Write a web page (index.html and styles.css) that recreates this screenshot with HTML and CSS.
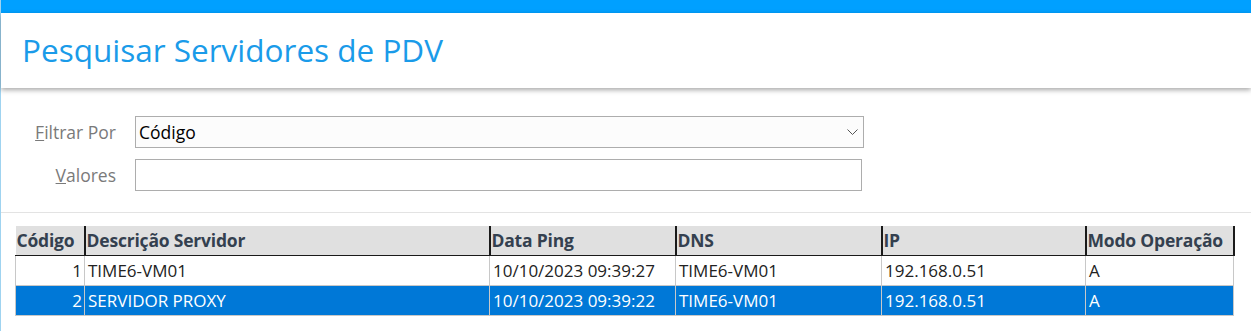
FILE: index.html
```html
<!DOCTYPE html>
<html lang="pt-BR">
<head>
    <meta charset="UTF-8">
    <title>Pesquisar Servidores de PDV</title>
    <link rel="stylesheet" href="styles.css">
</head>
<body>
<div class="page">
    <div class="topbar"></div>
    <div class="header">
        <h1 class="title">Pesquisar Servidores de PDV</h1>
    </div>
    <div class="filters">
        <div class="row">
            <span class="label"><u>F</u>iltrar Por</span>
            <div class="select">
                <span>Código</span>
                <svg width="11" height="7" viewBox="0 0 11 7"><path d="M0.5 0.5 L5.5 5.5 L10.5 0.5" fill="none" stroke="#555" stroke-width="1"/></svg>
            </div>
        </div>
        <div class="row">
            <span class="label"><u>V</u>alores</span>
            <div class="input"></div>
        </div>
    </div>
    <div class="gridarea">
        <table class="grid">
            <thead>
                <tr>
                    <th class="c1">Código</th>
                    <th class="c2">Descrição Servidor</th>
                    <th class="c3">Data Ping</th>
                    <th class="c4">DNS</th>
                    <th class="c5">IP</th>
                    <th class="c6">Modo Operação</th>
                </tr>
            </thead>
            <tbody>
                <tr>
                    <td class="num">1</td>
                    <td>TIME6-VM01</td>
                    <td>10/10/2023 09:39:27</td>
                    <td>TIME6-VM01</td>
                    <td>192.168.0.51</td>
                    <td>A</td>
                </tr>
                <tr class="selected">
                    <td class="num">2</td>
                    <td>SERVIDOR PROXY</td>
                    <td>10/10/2023 09:39:22</td>
                    <td>TIME6-VM01</td>
                    <td>192.168.0.51</td>
                    <td>A</td>
                </tr>
            </tbody>
        </table>
    </div>
</div>
</body>
</html>
```

FILE: styles.css
```css
*{margin:0;padding:0;box-sizing:border-box;}
body{background:#fff;font-family:"Open Sans","Noto Sans",sans-serif;width:1251px;height:331px;overflow:hidden;}
.page{border-left:1px solid #9fd3f0;height:331px;}
.topbar{height:13px;background:#00a0ff;}
.header{height:75px;background:#fff;box-shadow:0 2px 5px rgba(0,0,0,.35);position:relative;display:flex;align-items:center;padding-left:21px;padding-bottom:2px;}
.title{font-weight:400;font-size:31.5px;color:#1a9be9;letter-spacing:0;}
.filters{padding:28px 0 0 0;height:125px;border-bottom:1px solid #e3e3e3;}
.row{display:flex;align-items:center;margin-bottom:11px;}
.label{width:115px;text-align:right;font-size:17.5px;color:#7a7a7a;margin-right:19px;white-space:nowrap;}
.select{width:729px;height:32px;border:1px solid #adadad;background:#fcfcfc;display:flex;align-items:center;justify-content:space-between;padding:0 5px 0 3px;font-size:17.5px;color:#000;}
.input{width:727px;height:32px;border:1px solid #adadad;background:#fff;}
.gridarea{padding:13px 0 0 14px;}
.grid{border-collapse:collapse;font-size:17px;table-layout:fixed;width:1218px;}
.grid th{background:#e0e0e0;color:#34404f;font-weight:700;font-size:17.5px;text-align:left;height:29px;padding:0 0 0 1px;border-left:2px solid #1a1a1a;border-bottom:1px solid #1a1a1a;white-space:nowrap;overflow:hidden;letter-spacing:-0.2px;}
.grid th.c1{border-left:none;}
.grid th.c6{border-right:2px solid #1a1a1a;}
.c1{width:69px;}
.c2{width:405px;}
.c3{width:186px;}
.c4{width:206px;}
.c5{width:204px;}
.c6{width:148px;}
.grid td{height:30px;padding:0 3px;border:1px solid #c8c8c8;color:#222;white-space:nowrap;}
.grid td.num{text-align:right;padding-right:2px;}
.grid tr.selected td{background:#0078d7;color:#fff;}
```
